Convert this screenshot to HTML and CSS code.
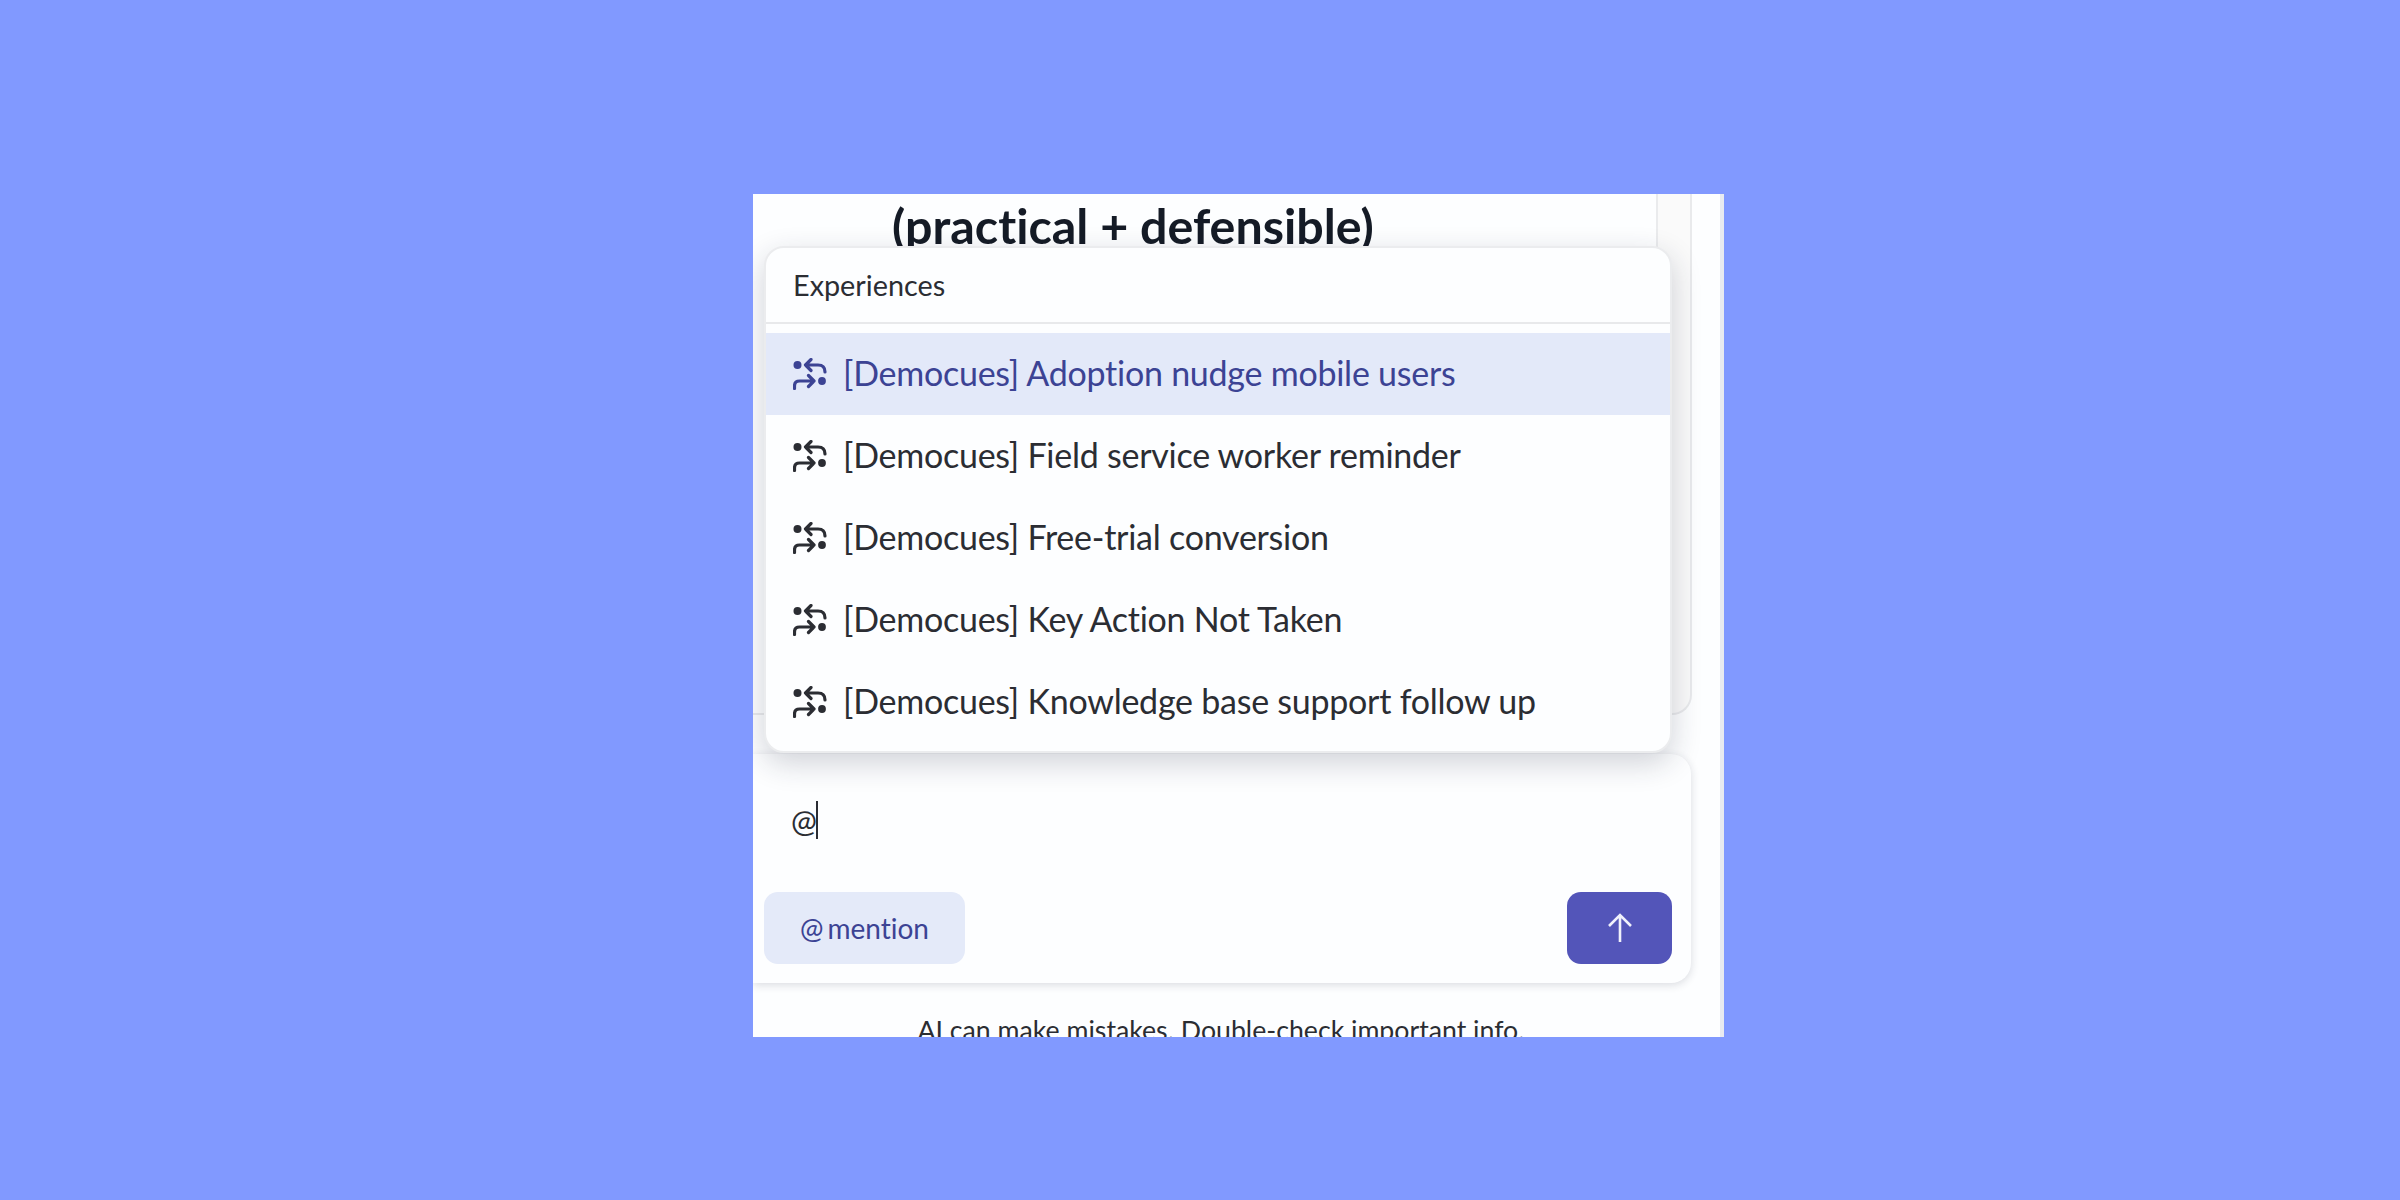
FILE: index.html

```html
<!DOCTYPE html>
<html lang="en">
<head>
  <meta charset="UTF-8">
  <title>Experiences mention</title>
  <link rel="stylesheet" href="styles.css">
</head>
<body>
  <svg class="defs" width="0" height="0">
    <symbol id="journey" viewBox="0 0 34 32">
      <circle cx="4.5" cy="7" r="4" fill="currentColor"/>
      <circle cx="29" cy="23" r="3.9" fill="currentColor"/>
      <path d="M18 1.5 12.5 7l5.5 5.5M12.5 7H25q7 0 7 7M1.5 30.5V28q0-5 5-5H21M15.5 17.5 21 23l-5.5 5.5" fill="none" stroke="currentColor" stroke-width="3.2" stroke-linecap="round" stroke-linejoin="round"/>
    </symbol>
  </svg>

  <div class="panel">
    <div class="thread">
      <div class="outer-card">
        <div class="inner-card">
          <h2>(practical + defensible)</h2>
        </div>
      </div>
    </div>

    <div class="dropdown">
      <div class="dropdown-title">Experiences</div>
      <ul class="options">
        <li class="option active"><svg class="journey-icon"><use href="#journey"/></svg><span>[Democues] Adoption nudge mobile users</span></li>
        <li class="option"><svg class="journey-icon"><use href="#journey"/></svg><span>[Democues] Field service worker reminder</span></li>
        <li class="option"><svg class="journey-icon"><use href="#journey"/></svg><span>[Democues] Free-trial conversion</span></li>
        <li class="option"><svg class="journey-icon"><use href="#journey"/></svg><span>[Democues] Key Action Not Taken</span></li>
        <li class="option"><svg class="journey-icon"><use href="#journey"/></svg><span>[Democues] Knowledge base support follow up</span></li>
      </ul>
    </div>

    <div class="composer">
      <div class="input-line"><span>@</span><span class="caret"></span></div>
      <div class="composer-actions">
        <button class="mention"><span class="at">@</span>mention</button>
        <button class="send">
          <svg width="26" height="30" viewBox="0 0 26 30"><path d="M13 29V2M2 13 13 2l11 11" fill="none" stroke="currentColor" stroke-width="2.6"/></svg>
        </button>
      </div>
    </div>

    <p class="disclaimer">AI can make mistakes. Double-check important info.</p>
  </div>
</body>
</html>
```

FILE: styles.css

```css
* {
  box-sizing: border-box;
}
body {
  margin: 0;
  height: 1200px;
  padding: 194px 0 0 753px;
  overflow: hidden;
  background-color: #8199ff;
  font-family: Lato, sans-serif;
  font-variant-ligatures: none;
  color: #2b2d33;
}
.defs {
  display: block;
}
.panel {
  position: relative;
  width: 971px;
  height: 843px;
  overflow: hidden;
  background-color: #fdfeff;
  border-right: 4px solid #e9ebf0;
}
.thread {
  height: 521px;
}
.outer-card {
  width: 939px;
  height: 521px;
  background-color: #fafafa;
  border-right: 2px solid #e9eaec;
  border-bottom: 2px solid #e9eaec;
  border-bottom-right-radius: 20px;
}
.inner-card {
  width: 905px;
  height: 100%;
  background-color: #fdfeff;
  border-right: 2px solid #eaebed;
  padding-left: 139px;
}
h2 {
  margin: 0;
  font-size: 48.4px;
  line-height: 62px;
  font-weight: 700;
  color: #151b26;
}

.dropdown {
  position: absolute;
  left: 11px;
  top: 52px;
  width: 908px;
  height: 507px;
  background-color: #fdfeff;
  border: 2px solid #ebecee;
  border-radius: 20px;
  box-shadow: 0 10px 30px rgba(30, 35, 60, 0.2);
  z-index: 2;
}
.dropdown-title {
  height: 76px;
  padding-left: 27px;
  font-size: 28.8px;
  line-height: 74px;
  border-bottom: 2px solid #e8e9eb;
}
.options {
  list-style: none;
  margin: 0;
  padding: 9px 0;
}
.option {
  display: flex;
  align-items: center;
  gap: 16px;
  height: 82px;
  padding-left: 27px;
  font-size: 34px;
  letter-spacing: -0.25px;
}
.option span {
  padding-bottom: 3px;
}
.option.active {
  background-color: #e3e9f9;
  color: #3c4394;
}
.journey-icon {
  width: 34px;
  height: 32px;
  flex: none;
}

.composer {
  width: 938px;
  height: 229px;
  margin-top: 39px;
  padding: 46px 19px 19px 11px;
  background-color: #fdfeff;
  border-radius: 0 20px 20px 0;
  box-shadow: 0 2px 8px rgba(30, 35, 60, 0.16);
  display: flex;
  flex-direction: column;
  justify-content: space-between;
}
.input-line {
  display: flex;
  align-items: center;
  height: 40px;
  padding-left: 27px;
  font-size: 31px;
}
.caret {
  width: 2px;
  height: 38px;
  margin-left: -1px;
  background-color: #2b2d33;
}
.composer-actions {
  display: flex;
  justify-content: space-between;
}
button {
  border: none;
  height: 72px;
  border-radius: 14px;
  font-family: inherit;
  font-variant-ligatures: none;
  display: flex;
  align-items: center;
  justify-content: center;
}
.mention {
  width: 201px;
  background-color: #e4eaf9;
  color: #3c4394;
  font-size: 28px;
}
.at {
  margin-right: 4px;
}
.send {
  width: 105px;
  background-color: #5355b9;
  color: #f0f1fb;
}

.disclaimer {
  margin: 29px 0 0;
  width: 936px;
  text-align: center;
  font-size: 26.7px;
  line-height: 36px;
}
```
